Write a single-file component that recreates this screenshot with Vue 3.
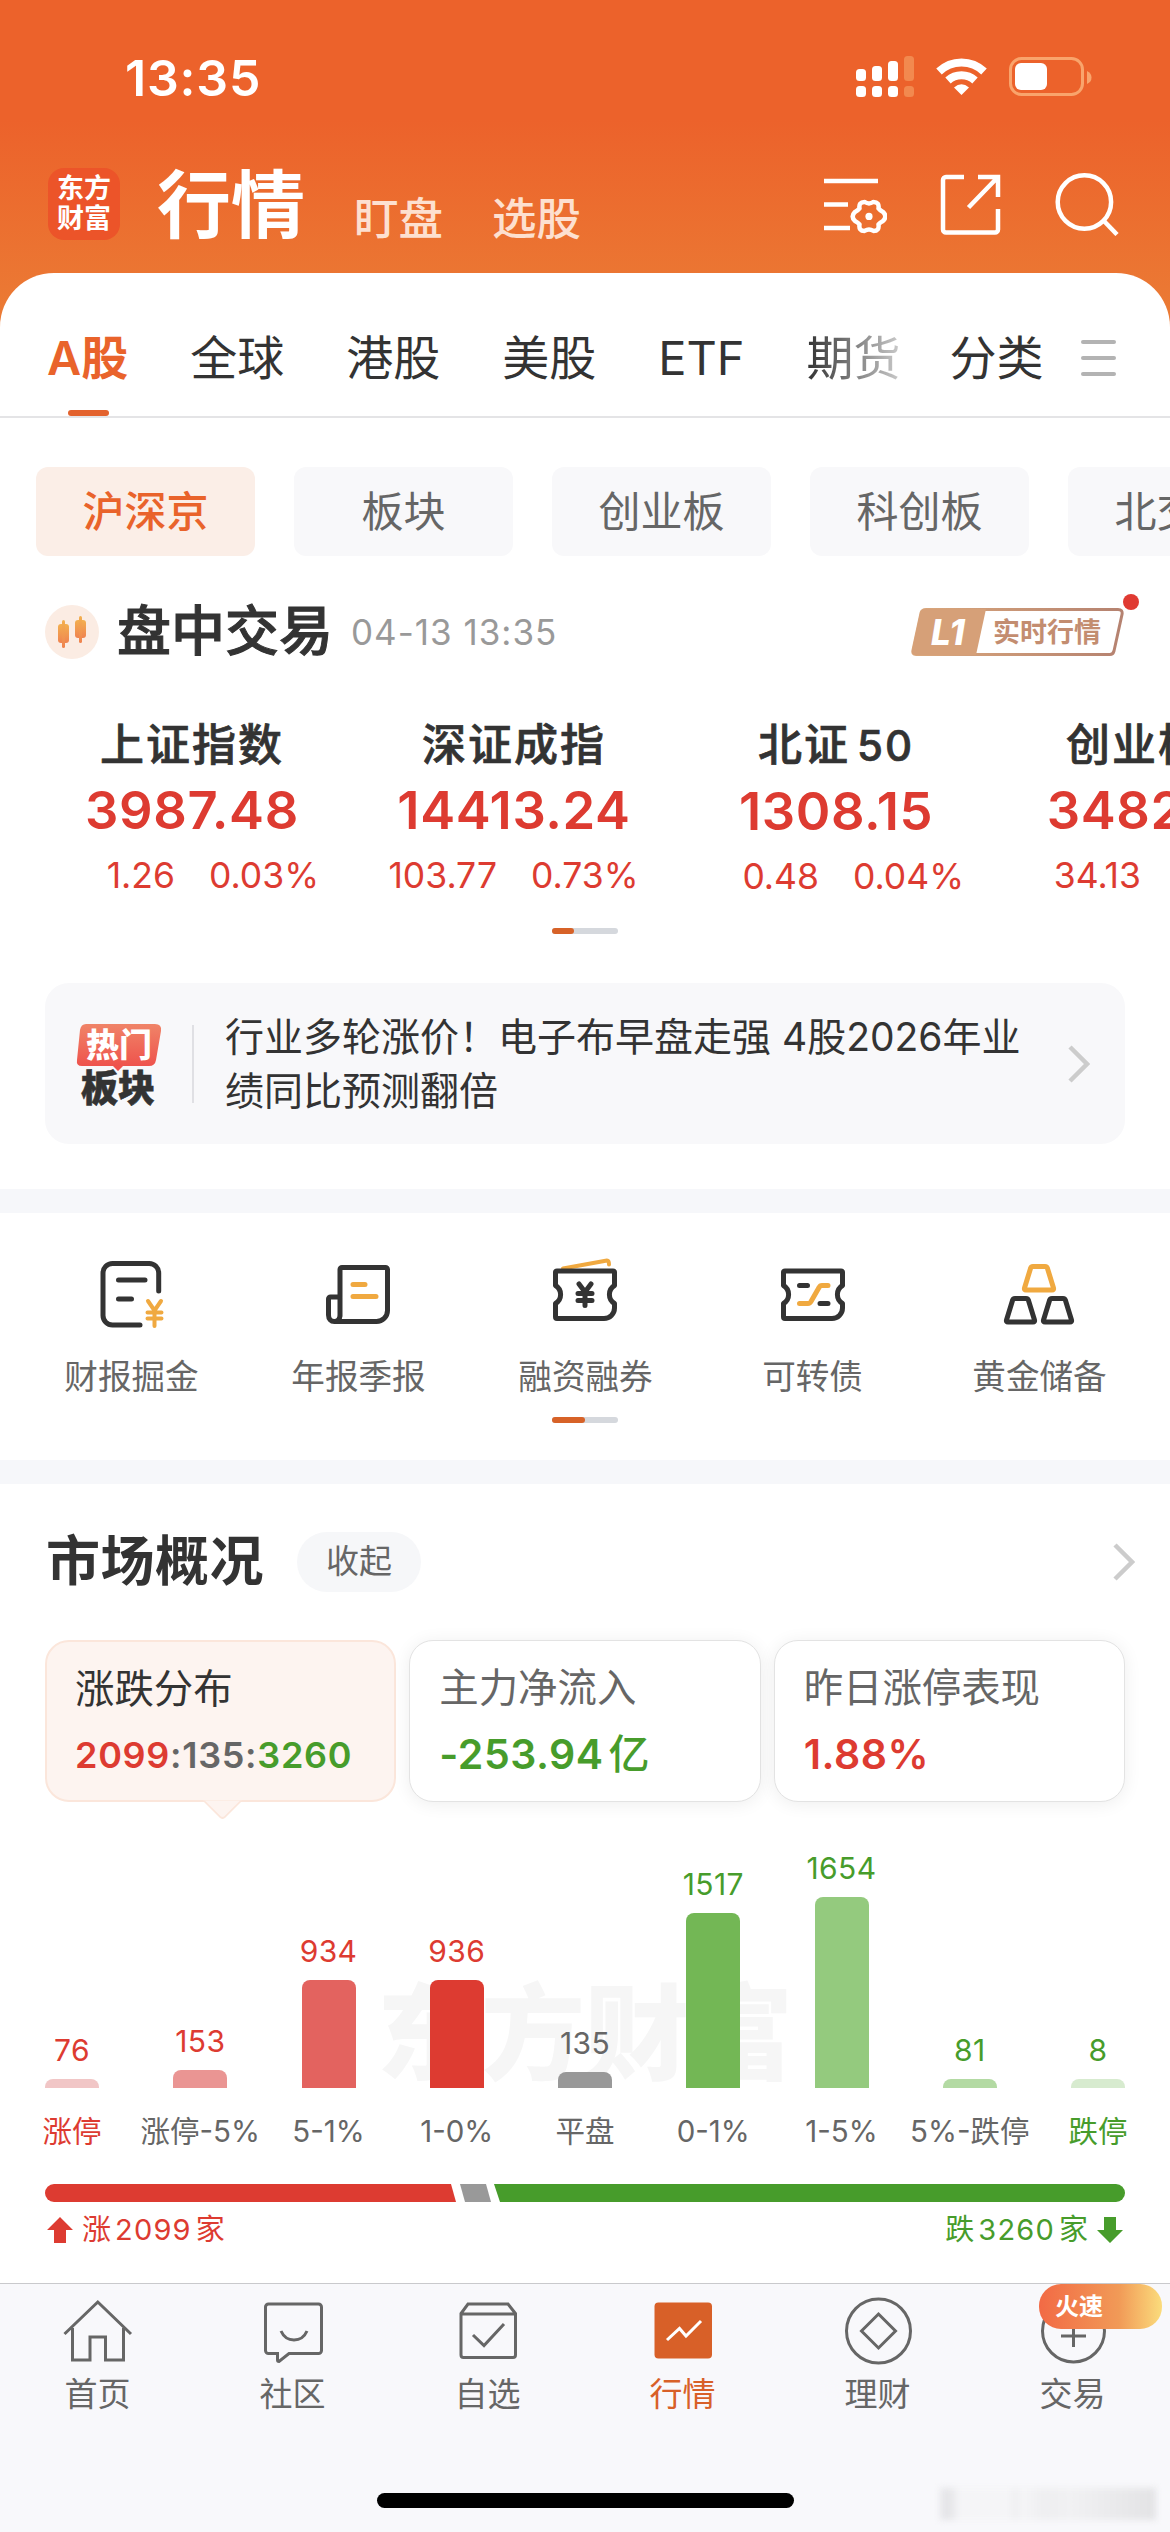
<script setup>
import { ref } from 'vue'

const markets = ['A股', '全球', '港股', '美股', 'ETF', '期货', '分类']
const activeMarket = ref('A股')

const boards = ['沪深京', '板块', '创业板', '科创板', '北交所']
const activeBoard = ref('沪深京')

const indices = [
    { name: '上证指数', value: '3987.48', diff: '1.26', rate: '0.03%' },
    { name: '深证成指', value: '14413.24', diff: '103.77', rate: '0.73%' },
    { name: '北证', num: '50', value: '1308.15', diff: '0.48', rate: '0.04%' },
    { name: '创业板指', value: '3482.09', diff: '34.13', rate: '0.99%' },
]

const dist = [
    { label: '涨停', count: 76, color: '#f1c6c6', type: 'up', edge: true },
    { label: '涨停-5%', count: 153, color: '#ea9593', type: 'up' },
    { label: '5-1%', count: 934, color: '#e3635f', type: 'up' },
    { label: '1-0%', count: 936, color: '#dd3b31', type: 'up' },
    { label: '平盘', count: 135, color: '#999999', type: 'flat' },
    { label: '0-1%', count: 1517, color: '#73b755', type: 'down' },
    { label: '1-5%', count: 1654, color: '#94ca7e', type: 'down' },
    { label: '5%-跌停', count: 81, color: '#b3daa3', type: 'down' },
    { label: '跌停', count: 8, color: '#d7ebcf', type: 'down', edge: true },
]

const barHeight = (count) => Math.max(9, Math.round(count * 0.1155)) + 'px'
</script>

<template>
    <div class="page">
        <header class="top">
            <div class="status">
                <span class="time">13:35</span>
                <svg class="statusIcons" width="240" height="44" viewBox="854 54 240 44">
                    <g fill="#fff">
                        <rect x="856" y="69" width="10" height="12" rx="3.5" />
                        <rect x="872" y="66" width="10" height="15" rx="3.5" />
                        <rect x="888" y="61" width="10" height="20" rx="3.5" />
                        <rect x="856" y="86" width="10" height="11" rx="3.5" />
                        <rect x="872" y="86" width="10" height="11" rx="3.5" />
                        <rect x="888" y="86" width="10" height="11" rx="3.5" />
                    </g>
                    <g fill="#f2894f">
                        <rect x="904" y="56" width="10" height="25" rx="3.5" />
                        <rect x="904" y="86" width="10" height="11" rx="3.5" />
                    </g>
                    <g fill="none" stroke="#fff" stroke-width="8">
                        <path d="M939 71.500a32.500 32.500 0 0 1 45 0" />
                        <path d="M948 80.500a20 20 0 0 1 27 0" />
                    </g>
                    <path d="M961.500 95l-7.500-7.500q7.500-6.500 15 0z" fill="#fff" />
                    <rect x="1010.500" y="58.500" width="72" height="36" rx="11" fill="none" stroke="#f9a46c" stroke-width="3" />
                    <path d="M1087 71v13q4.500-2 4.500-6.500t-4.500-6.500z" fill="#f9a46c" />
                    <rect x="1015" y="63" width="32" height="27" rx="6" fill="#fff" />
                </svg>
            </div>
            <div class="nav">
                <div class="logo"><span>东方</span><span>财富</span></div>
                <h1>行情</h1>
                <span class="navLink">盯盘</span>
                <span class="navLink">选股</span>
                <div class="navIcons">
                    <svg width="64" height="64" viewBox="0 0 64 64">
                        <path d="M1 9h54M1 32.500h24M1 56h26" />
                        <path transform="translate(46 44.400)" stroke-linejoin="round" d="M9.500-8Q11-6 14-4.500Q18.500 0 14 4.500Q11 6 9.500 8Q10.500 14.500 4.500 14.500Q2 13 0 13Q-2 13-4.500 14.500Q-10.500 14.500-9.500 8Q-11 6-14 4.500Q-18.500 0-14-4.500Q-11-6-9.500-8Q-10.500-14.500-4.500-14.500Q-2-13 0-13Q2-13 4.500-14.500Q10.500-14.500 9.500-8z" />
                        <circle cx="46" cy="44.400" r="3.600" class="solid" />
                    </svg>
                    <svg width="64" height="64" viewBox="0 0 64 64">
                        <path d="M25 5H7a3 3 0 0 0-3 3v49.500a3 3 0 0 0 3 3h49a3 3 0 0 0 3-3V37M39 5h20v20M59 5L29.500 35.500" />
                    </svg>
                    <svg width="64" height="64" viewBox="0 0 64 64">
                        <circle cx="29.400" cy="30" r="26.700" />
                        <path d="M48 48l14 14.500" />
                    </svg>
                </div>
            </div>
        </header>

        <nav class="markets">
            <span
                v-for="m in markets"
                :key="m"
                class="market"
                :class="{ active: m === activeMarket, fade: m === '期货', last: m === '分类' }"
                @click="activeMarket = m"
            >{{ m }}</span>
            <span class="burger"><i /><i /><i /></span>
        </nav>

        <div class="boards">
            <span
                v-for="b in boards"
                :key="b"
                class="board"
                :class="{ active: b === activeBoard }"
                @click="activeBoard = b"
            >{{ b }}</span>
        </div>

        <div class="trading">
            <svg class="candle" width="54" height="54" viewBox="0 0 54 54">
                <defs>
                    <linearGradient id="candleFill" x1="0" y1="1" x2="0" y2="0">
                        <stop offset="0" stop-color="#ef8350" />
                        <stop offset="1" stop-color="#f3b04f" />
                    </linearGradient>
                </defs>
                <circle cx="27" cy="27" r="27" fill="#fbece3" />
                <g fill="url(#candleFill)">
                    <rect x="13" y="19" width="11" height="19" rx="3" />
                    <rect x="17" y="15" width="3" height="28" rx="1.500" />
                    <rect x="30" y="15" width="11" height="18" rx="3" />
                    <rect x="34" y="11" width="3" height="27" rx="1.500" />
                </g>
            </svg>
            <h2>盘中交易</h2>
            <span class="date">04-13 13:35</span>
            <div class="level">
                <svg width="214" height="48" viewBox="0 0 214 48">
                    <defs>
                        <linearGradient id="levelFill" x1="0" x2="1">
                            <stop offset="0" stop-color="#dba87c" />
                            <stop offset="1" stop-color="#b58270" />
                        </linearGradient>
                    </defs>
                    <path d="M15 1.500H207q5 0 4 5L203 43q-1 3.500-4 3.500H5q-4 0-3-4.500L10 5q1-3.500 5-3.500z" fill="#fff" stroke="url(#levelFill)" stroke-width="3" />
                    <path d="M14 1H75L65 47H5q-5 0-4-5L9 5q1-4 5-4z" fill="#d6a078" />
                    <text x="20" y="36.500" class="levelTag">L1</text>
                    <text x="82" y="34" class="levelText">实时行情</text>
                </svg>
                <i class="dot" />
            </div>
        </div>

        <div class="indices">
            <div v-for="item in indices" :key="item.name" class="index">
                <div class="indexName">{{ item.name }}<b v-if="item.num">{{ item.num }}</b></div>
                <div class="indexValue">{{ item.value }}</div>
                <div class="indexDiff"><span>{{ item.diff }}</span><span>{{ item.rate }}</span></div>
            </div>
        </div>
        <div class="pager short"><i /></div>

        <div class="news">
            <svg class="hot" width="86" height="84" viewBox="0 0 86 84">
                <defs>
                    <linearGradient id="hotFill" x1="0" y1="0" x2="0" y2="1">
                        <stop offset="0" stop-color="#f08468" />
                        <stop offset="1" stop-color="#ee4d49" />
                    </linearGradient>
                </defs>
                <path d="M10 0H79q7 0 6 7L80 36q-1 6-7 6H47l-5 5-5-5H6q-6 0-5-6L4 6q1-6 6-6z" fill="url(#hotFill)" />
                <text x="10" y="33" class="hotTop">热门</text>
                <text x="5" y="78" class="hotBottom">板块</text>
            </svg>
            <i class="line" />
            <p>行业多轮涨价！电子布早盘走强 4股2026年业绩同比预测翻倍</p>
            <svg class="arrow" width="22" height="38" viewBox="0 0 22 38"><path d="M2 2l17 17L2 36" /></svg>
        </div>

        <div class="band" />

        <div class="tools">
            <div class="tool">
                <svg width="76" height="76" viewBox="0 0 76 76">
                    <path d="M64.700 34V16a9.500 9.500 0 0 0-9.500-9.500H18.500A9.500 9.500 0 0 0 9 16v42.500a9.500 9.500 0 0 0 9.500 9.500H46M24.500 23H51M24.500 42H37.500" />
                    <path class="gold thin" d="M54 44l6.500 9.500L67 44M60.500 53.500V69M53.500 55.500h14M53.500 61.500h14" />
                </svg>
                <span>财报掘金</span>
            </div>
            <div class="tool">
                <svg width="76" height="76" viewBox="0 0 76 76">
                    <path d="M19 59V12.500a2 2 0 0 1 2-2h43.500a2 2 0 0 1 2 2V53.500a11 11 0 0 1-11 11H13M19 40H9.500a2 2 0 0 0-2 2V58c0 4 2.500 6.500 5.800 6.500S19 62 19 58" />
                    <path class="gold" d="M32 27.500h12M32 39.500h23" />
                </svg>
                <span>年报季报</span>
            </div>
            <div class="tool">
                <svg width="76" height="76" viewBox="0 0 76 76">
                    <path class="gold thin" d="M15 11.500L59 3.500q2 0 2 4" />
                    <path d="M9 14H65q1.500 0 1.500 1.500V28.500a10.500 10.500 0 0 0 0 18V51a10.500 10.500 0 0 1-10.500 10.500H9q-1.500 0-1.500-1.500V46.500a10.500 10.500 0 0 0 0-18V15.500Q7.500 14 9 14z" />
                    <path d="M31 27l6 8 6-8M37 35v13.500M30 36.500h14M30 43.500h14" />
                </svg>
                <span>融资融券</span>
            </div>
            <div class="tool">
                <svg width="76" height="76" viewBox="0 0 76 76">
                    <path d="M10 14H66q1.500 0 1.500 1.500V28.500a10.500 10.500 0 0 0 0 18V51a10.500 10.500 0 0 1-10.500 10.500H10q-1.500 0-1.500-1.500V46.500a10.500 10.500 0 0 0 0-18V15.500Q8.500 14 10 14zM24.500 28.500h8M45 46.500h8" />
                    <path class="gold" d="M24.500 46.500h8.500q2 0 3-2l8-14q1-2 3-2h6" />
                </svg>
                <span>可转债</span>
            </div>
            <div class="tool">
                <svg width="76" height="76" viewBox="0 0 76 76">
                    <path class="gold" d="M31 9.500H43q2 0 2.500 2L51.500 31q.5 2-1.500 2H24q-2 0-1.500-2L28.500 11.500q.5-2 2.500-2z" />
                    <path d="M13 41.500H24q2 0 2.500 2L32.500 63q.5 2-1.500 2H6q-2 0-1.500-2L10.500 43.500q.5-2 2.500-2zM50 41.500H61q2 0 2.500 2L69.500 63q.5 2-1.500 2H43q-2 0-1.500-2L47.500 43.500q.5-2 2.500-2z" />
                </svg>
                <span>黄金储备</span>
            </div>
        </div>
        <div class="pager half"><i /></div>

        <div class="band second" />

        <div class="overviewHead">
            <h2>市场概况</h2>
            <span class="fold">收起</span>
            <svg class="arrow" width="22" height="38" viewBox="0 0 22 38"><path d="M2 2l17 17L2 36" /></svg>
        </div>

        <div class="cards">
            <div class="card active">
                <span class="cardLabel">涨跌分布</span>
                <span class="cardValue small"><em class="up">2099</em>:135:<em class="down">3260</em></span>
                <i class="tip" />
            </div>
            <div class="card">
                <span class="cardLabel">主力净流入</span>
                <span class="cardValue down">-253.94<em class="unit">亿</em></span>
            </div>
            <div class="card">
                <span class="cardLabel">昨日涨停表现</span>
                <span class="cardValue up">1.88%</span>
            </div>
        </div>

        <div class="chart">
            <div class="watermark">东方财富</div>
            <div v-for="d in dist" :key="d.label" class="col" :class="d.type">
                <span class="count">{{ d.count }}</span>
                <i class="bar" :style="{ height: barHeight(d.count), background: d.color }" />
                <span class="axis" :class="{ edge: d.edge }">{{ d.label }}</span>
            </div>
        </div>

        <svg class="ratio" width="1080" height="18" viewBox="0 0 1080 18">
            <path d="M9 0H406l5 18H9A9 9 0 0 1 9 0z" fill="#dd3b31" />
            <path d="M415 0h26l5 18h-26z" fill="#999" />
            <path d="M449 0h622a9 9 0 0 1 0 18H455z" fill="#479c2b" />
        </svg>
        <div class="ratioText">
            <span class="up">
                <svg width="26" height="26" viewBox="0 0 26 26"><path d="M13 0l13 13h-7v13H7V13H0z" /></svg>
                涨<em>2099</em>家
            </span>
            <span class="down">
                跌<em>3260</em>家
                <svg width="26" height="26" viewBox="0 0 26 26"><path d="M13 26L0 13h7V0h12v13h7z" /></svg>
            </span>
        </div>

        <footer class="tabbar">
            <div class="tabs">
                <div class="tab">
                    <svg width="72" height="72" viewBox="0 0 72 72">
                        <path d="M2.500 40L35.800 8 69 40M10.500 34V66H28V43H43.500V66H61.500V34" />
                    </svg>
                    <span>首页</span>
                </div>
                <div class="tab">
                    <svg width="72" height="72" viewBox="0 0 72 72">
                        <path d="M11.500 10H61.500a3 3 0 0 1 3 3V56.500a3 3 0 0 1-3 3H32L22 67.500q-1.500 0-1.500-1.500V59.500H11.500a3 3 0 0 1-3-3V13a3 3 0 0 1 3-3z" />
                        <path d="M24 37q4 9 13 9t13-9" />
                    </svg>
                    <span>社区</span>
                </div>
                <div class="tab">
                    <svg width="72" height="72" viewBox="0 0 72 72">
                        <path d="M16 10H56L63.500 19.500V61a2.500 2.500 0 0 1-2.500 2.500H11.500A2.500 2.500 0 0 1 9 61V19.500zM9 20H63.500M21 41l11 10.500L52 30" />
                    </svg>
                    <span>自选</span>
                </div>
                <div class="tab active">
                    <svg width="72" height="72" viewBox="0 0 72 72">
                        <rect x="7.500" y="8.500" width="57.500" height="56" rx="4" class="fill" />
                        <path d="M20 46L32.500 34.500 39 42 54 27" class="white" />
                    </svg>
                    <span>行情</span>
                </div>
                <div class="tab">
                    <svg width="72" height="72" viewBox="0 0 72 72">
                        <circle cx="36.500" cy="37" r="32" />
                        <path d="M36.500 20l17 17-17 17-17-17z" />
                    </svg>
                    <span>理财</span>
                </div>
                <div class="tab">
                    <svg width="72" height="72" viewBox="0 0 72 72">
                        <circle cx="36.500" cy="37" r="31" />
                        <path d="M36.500 29V53M24 42H49" />
                    </svg>
                    <span>交易</span>
                    <b class="fast">火速</b>
                </div>
            </div>
            <div class="homeBar" />
            <div class="smear" />
        </footer>
    </div>
</template>

<style>
body {
    margin: 0;
    background: #fff;
}
</style>

<style scoped>
.page {
    position: relative;
    display: flex;
    flex-direction: column;
    width: 1170px;
    height: 2532px;
    overflow: hidden;
    background: linear-gradient(#ec622b 0, #ec622b 120px, #eb7a34 310px, #eb7a34 400px, #fff 400px);
    font-family: Inter, "Noto Sans CJK SC", sans-serif;
    color: #333;
}

.page > * {
    flex-shrink: 0;
}

h1, h2, p {
    margin: 0;
}

em, i {
    font-style: normal;
}

.up {
    color: #dd3b31;
}

.down {
    color: #479c2b;
}

.flat {
    color: #666;
}

.top {
    height: 273px;
}

.status {
    display: flex;
    justify-content: space-between;
    padding: 54px 76px 0 125px;
    height: 44px;
}

.time {
    color: #fff;
    font-size: 50px;
    font-weight: 600;
    line-height: 48px;
    letter-spacing: .8px;
}

.nav {
    display: flex;
    align-items: flex-end;
    height: 72px;
    margin-top: 70px;
    padding: 0 51px 0 48px;
    color: #fff;
}

.logo {
    display: flex;
    flex-direction: column;
    justify-content: center;
    align-items: center;
    width: 72px;
    height: 72px;
    border-radius: 16px;
    background: #ec5429;
    font-size: 27px;
    font-weight: 700;
    line-height: 30px;
}

h1 {
    margin-left: 37px;
    font-size: 74px;
    font-weight: 700;
    line-height: 70px;
}

.navLink {
    margin-left: 49px;
    font-size: 44.500px;
    font-weight: 500;
    line-height: 42px;
    color: #fde0d0;
}

.navIcons {
    display: flex;
    gap: 52px;
    margin-left: auto;
    align-self: center;
}

.navIcons svg {
    fill: none;
    stroke: #fff;
    stroke-width: 4.5;
}

.navIcons .solid {
    fill: #fff;
    stroke: none;
}

.markets {
    display: flex;
    align-items: center;
    box-sizing: border-box;
    height: 145px;
    padding: 27px 54px 0 47px;
    gap: 62px;
    background: #fff;
    border-radius: 54px 54px 0 0;
    border-bottom: 2px solid #e4e4e6;
    font-size: 47px;
    line-height: 60px;
}

.market {
    position: relative;
    white-space: nowrap;
}

.market.active {
    color: #e9632b;
    font-weight: 600;
}

.market.active::after {
    content: "";
    position: absolute;
    left: 21px;
    bottom: -28px;
    width: 41px;
    height: 6px;
    border-radius: 3px;
    background: #e3622d;
}

.market.fade {
    background: linear-gradient(90deg, #333, #ccc);
    background-clip: text;
    color: transparent;
}

.market.last {
    margin-left: -13px;
}

.burger {
    display: flex;
    flex-direction: column;
    justify-content: space-between;
    width: 36px;
    height: 36px;
    margin-left: -25px;
}

.burger i {
    height: 4px;
    border-radius: 2px;
    background: #b3b3b3;
}

.boards {
    display: flex;
    gap: 39px;
    padding: 49px 0 0 36px;
    height: 89px;
    overflow: hidden;
    background: #fff;
}

.board {
    flex: none;
    width: 219px;
    height: 89px;
    border-radius: 12px;
    background: #f8f8fa;
    color: #666;
    font-size: 42px;
    line-height: 90px;
    text-align: center;
}

.board.active {
    background: #fbeee7;
    color: #e9632b;
    font-weight: 500;
}

.trading {
    display: flex;
    align-items: center;
    height: 54px;
    padding: 49px 45px 0;
}

h2 {
    font-size: 54px;
    font-weight: 600;
    line-height: 54px;
}

.trading h2 {
    margin-left: 18px;
    font-weight: 500;
    -webkit-text-stroke: 1px #333;
}

.date {
    margin-left: 18px;
    color: #999;
    font-size: 35px;
    letter-spacing: 1px;
}

.level {
    position: relative;
    height: 48px;
    margin-left: auto;
}

.levelTag {
    fill: #fff;
    font-size: 35px;
    font-weight: 800;
    font-style: italic;
}

.levelText {
    fill: #c38d70;
    font-size: 27px;
    font-weight: 700;
}

.dot {
    position: absolute;
    right: -14px;
    top: -14px;
    width: 16px;
    height: 16px;
    border-radius: 50%;
    background: #e03a32;
}

.indices {
    display: flex;
    height: 269px;
    padding-left: 31px;
    box-sizing: border-box;
    padding-top: 57px;
    overflow: hidden;
}

.index {
    flex: none;
    width: 322px;
    text-align: center;
}

.indexName {
    font-size: 44px;
    font-weight: 500;
    line-height: 58px;
    letter-spacing: 2px;
    -webkit-text-stroke: .7px #333;
}

.indexName b {
    margin-left: 7px;
    font-size: 42px;
    font-weight: 500;
}

.indexValue {
    color: #dd3b31;
    font-size: 52.500px;
    font-weight: 600;
    line-height: 72px;
    letter-spacing: .6px;
}

.indexDiff {
    display: grid;
    grid-template-columns: 1fr 1fr;
    gap: 34px;
    color: #dd3b31;
    font-size: 35.500px;
    line-height: 60px;
}

.indexDiff span:first-child {
    text-align: right;
}

.indexDiff span:last-child {
    text-align: left;
}

.pager {
    display: flex;
    width: 66px;
    height: 6px;
    margin: 0 auto;
    border-radius: 3px;
    background: #d5d8dd;
}

.pager i {
    width: 50%;
    border-radius: 3px;
    background: #d76228;
}

.pager.short i {
    width: 33.4%;
}

.news {
    display: flex;
    align-items: center;
    height: 161px;
    margin: 49px 45px 0;
    padding: 0 36px 0 31px;
    border-radius: 24px;
    background: #f8f8fa;
}

.hot {
    margin-top: 4px;
}

.hotTop {
    fill: #fff;
    font-size: 33px;
    font-weight: 900;
}

.hotBottom {
    fill: #333;
    stroke: #333;
    stroke-width: .6;
    font-size: 37px;
    font-weight: 900;
}

.line {
    width: 2px;
    height: 78px;
    margin: 0 31px 0 30px;
    background: #e0e0e4;
}

.news p {
    width: 810px;
    font-size: 39px;
    line-height: 54px;
}

.arrow {
    margin-left: auto;
    fill: none;
    stroke: #ccc;
    stroke-width: 4.5;
}

.news .arrow {
    margin-right: -1px;
}

.band {
    height: 24px;
    margin-top: 45px;
    background: #f6f7fa;
}

.tools {
    display: flex;
    margin: 44px 17px 0 18px;
}

.tool {
    display: flex;
    flex-direction: column;
    align-items: center;
    flex: 1;
    color: #666;
    font-size: 33.600px;
    line-height: 44px;
    gap: 22px;
}

.tool svg {
    fill: none;
    stroke: #333;
    stroke-width: 5;
    stroke-linecap: round;
    stroke-linejoin: round;
}

.tool .gold {
    stroke: #f0a940;
}

.tool .thin {
    stroke-width: 4;
}

.pager.half {
    margin-top: 18px;
}

.band.second {
    margin-top: 37px;
}

.overviewHead {
    display: flex;
    align-items: center;
    height: 60px;
    padding: 48px 35px 0 46px;
}

.overviewHead h2 {
    letter-spacing: .5px;
}

.fold {
    width: 124px;
    height: 60px;
    margin-left: 33px;
    border-radius: 30px;
    background: #f6f7f9;
    color: #666;
    font-size: 33px;
    line-height: 59px;
    text-align: center;
}

.cards {
    display: grid;
    grid-template-columns: repeat(3, 1fr);
    gap: 13px;
    margin: 48px 45px 0;
}

.card {
    position: relative;
    display: flex;
    flex-direction: column;
    box-sizing: border-box;
    height: 162px;
    padding: 20px 0 0 29px;
    border: 1.500px solid #e3e3e3;
    border-radius: 24px;
    background: #fff;
    box-shadow: 0 2px 18px rgba(0, 0, 0, .07);
}

.card.active {
    padding-left: 28px;
    background: #fdf4f0;
    border: 2px solid #fbe6db;
    box-shadow: none;
}

.cardLabel {
    color: #666;
    font-size: 39.400px;
    line-height: 54px;
}

.active .cardLabel {
    color: #333;
}

.cardValue {
    font-size: 41px;
    font-weight: 600;
    line-height: 50px;
    margin-top: 14px;
    letter-spacing: .5px;
}

.cardValue.small {
    color: #666;
    font-size: 36px;
    letter-spacing: .7px;
}

.unit {
    margin-left: 5px;
    font-weight: 500;
}

.tip {
    position: absolute;
    left: 161px;
    bottom: -15px;
    width: 27px;
    height: 27px;
    border: solid #fbe6db;
    border-width: 0 2px 2px 0;
    border-radius: 0 0 5px 0;
    background: #fdf4f0;
    clip-path: polygon(100% 0, 100% 100%, 0 100%);
    transform: rotate(45deg);
}

.chart {
    position: relative;
    display: flex;
    justify-content: space-between;
    align-items: flex-end;
    height: 349px;
    margin: 0 45px;
}

.watermark {
    position: absolute;
    left: 332px;
    bottom: 57px;
    color: #f6f6f6;
    font-size: 104px;
    font-weight: 900;
    line-height: 120px;
}

.col {
    position: relative;
    display: flex;
    flex-direction: column;
    align-items: center;
    width: 54px;
    white-space: nowrap;
}

.count {
    font-size: 30px;
    line-height: 30px;
    margin-bottom: 14px;
    letter-spacing: .4px;
}

.bar {
    width: 54px;
    border-radius: 8px 8px 0 0;
}

.axis {
    color: #666;
    font-size: 29.500px;
    line-height: 40px;
    margin: 23px 0 0;
}

.axis.edge {
    color: inherit;
}

.ratio {
    display: block;
    margin: 33px 45px 0;
}

.ratioText {
    display: flex;
    justify-content: space-between;
    margin: 8px 47px 0;
    font-size: 29px;
    line-height: 40px;
}

.ratioText span {
    display: flex;
    align-items: center;
}

.ratioText em {
    margin: 0 4px;
    letter-spacing: 1.200px;
}

.ratioText svg {
    fill: currentColor;
}

.ratioText .up svg {
    margin-right: 9px;
}

.ratioText .down svg {
    margin-left: 9px;
}

.tabbar {
    position: relative;
    box-sizing: border-box;
    height: 249px;
    margin-top: auto;
    border-top: 1px solid #c9c9cc;
    background: #f8f8fb;
}

.tabs {
    display: flex;
    justify-content: center;
    padding-top: 10px;
}

.tab {
    position: relative;
    display: flex;
    flex-direction: column;
    align-items: center;
    width: 195px;
    color: #666;
    font-size: 33px;
    line-height: 40px;
    gap: 8px;
}

.tab svg {
    fill: none;
    stroke: #666;
    stroke-width: 3;
}

.tab.active {
    color: #d86028;
}

.tab .fill {
    fill: #d86028;
    stroke: none;
}

.tab .white {
    stroke: #fff;
}

.fast {
    position: absolute;
    left: 64px;
    top: -10px;
    width: 107px;
    height: 45px;
    padding-left: 16px;
    border-radius: 22px;
    background: linear-gradient(90deg, #f26a45, #f19a57 65%, #fbdc7c);
    color: #fff;
    font-size: 24px;
    line-height: 45px;
}

.homeBar {
    width: 417px;
    height: 15px;
    margin: 79px auto 0;
    border-radius: 8px;
    background: #000;
}

.smear {
    position: absolute;
    right: 14px;
    bottom: 12px;
    width: 216px;
    height: 32px;
    background: linear-gradient(90deg, #e6e6e9 0, #e6e6e9 12px, #f5f5f7 18px, #f5f5f7 70px, #eeeef0 74px, #f5f5f7 82px, #eeeef0 106px, #f1f1f3 130px, #e3e3e5 100%);
    filter: blur(3px);
}
</style>
